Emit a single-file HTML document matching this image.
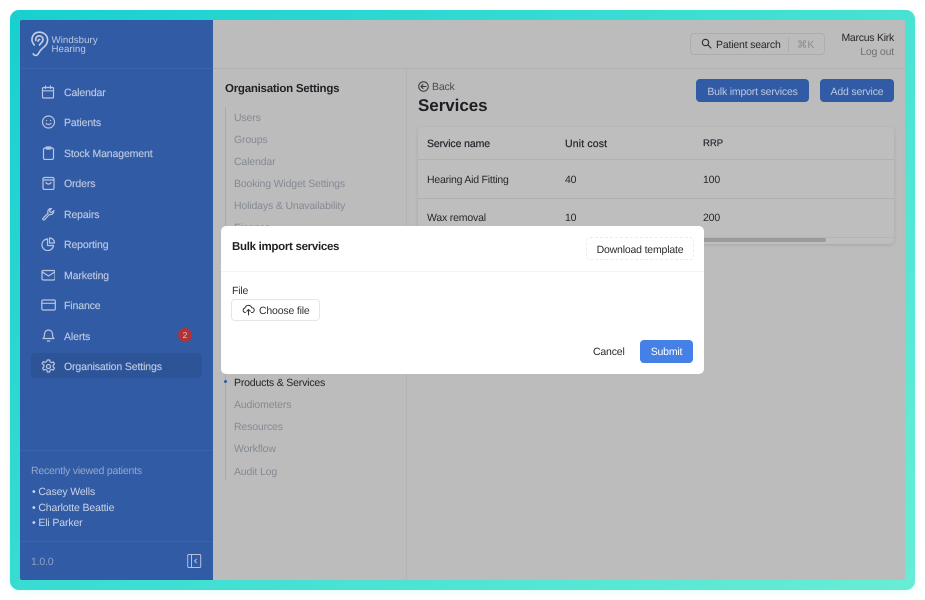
<!DOCTYPE html>
<html><head><meta charset="utf-8">
<style>
*{box-sizing:border-box;margin:0;padding:0}
html,body{width:925px;height:600px;overflow:hidden;background:#fff;font-family:"Liberation Sans",sans-serif;text-rendering:geometricPrecision}
#w{position:absolute;left:0;top:0;width:925px;height:600px;overflow:hidden;filter:blur(.3px)}
.a{position:absolute;white-space:nowrap;line-height:14px;font-size:10.5px;letter-spacing:-.18px;margin-top:1px}
.b{position:absolute}
svg{position:absolute;fill:none;stroke-linecap:round;stroke-linejoin:round}
.nav{color:#bcc8e0;left:64px;letter-spacing:-.12px;-webkit-text-stroke:.15px #bcc8e0}
.ic{stroke:#b9c5de;stroke-width:1.2;margin-left:.5px}
.sub{left:234px;color:#858a93;letter-spacing:-.15px}
.dk{color:#26282c}
.hd{color:#23252b;-webkit-text-stroke:.2px #23252b}
</style></head><body><div id="w">
<div class="b" style="left:10px;top:10px;width:905px;height:580px;border-radius:9px;background:linear-gradient(135deg,#18d0d0,#68edd5);box-shadow:0 3px 8px rgba(100,235,215,.12)"></div>
<div class="b" style="left:20px;top:20px;width:885px;height:560px;background:#bcbcbc;overflow:hidden;border-radius:2px"></div>
<div class="b" style="left:20px;top:20px;width:193px;height:560px;background:#315ca5;border-radius:2px 0 0 2px"></div>
<div class="b" style="left:20px;top:68px;width:193px;height:1px;background:#3a63a9"></div>
<div class="b" style="left:20px;top:450px;width:193px;height:1px;background:#3a63a9"></div>
<div class="b" style="left:20px;top:541px;width:193px;height:1px;background:#3a63a9"></div>
<div class="b" style="left:213px;top:68px;width:692px;height:1px;background:#b0b0b0"></div>
<div class="b" style="left:406px;top:69px;width:1px;height:511px;background:#b3b3b3"></div>

<!-- logo -->
<svg style="left:30px;top:30px" width="20" height="28" viewBox="0 0 20 28" stroke="#c6d0e4" stroke-width="1.6"><path d="M3.200 23.800c.8 1.500 2.300 2 3.600 1.400 2-1 2.300-3.400 4-5.200 2.800-3 6.800-4.800 6.800-10 0-4.700-3.800-7.800-8.300-7.800S1.700 5.300 2 10.500c.1 1.700 1 2.800 2.300 4.500"/><path d="M5.700 10.500C5.500 7.500 7.200 5.800 9.300 5.800s4 1.800 3.700 4.200c-.3 2.200-2.500 3.200-3.500 5"/><path d="M8 11.200c.1-1 .8-1.700 1.700-1.700"/></svg>
<div class="a" style="left:51.500px;top:35px;color:#bcc8e0;font-size:9.700px;line-height:9px;letter-spacing:.05px;white-space:normal;width:60px">Windsbury<br>Hearing</div>

<!-- nav icons -->
<svg class="ic" style="left:40px;top:85px" width="14" height="14" viewBox="0 0 14 14"><rect x="1.500" y="2.500" width="11" height="10.500" rx="1"/><path d="M1.500 5.800h11M4.500 1v2.500M9.500 1v2.500"/></svg>
<svg class="ic" style="left:40px;top:115px" width="14" height="14" viewBox="0 0 14 14"><circle cx="7.500" cy="7" r="6"/><path d="M5 8.500c1.300 1.300 3.700 1.300 5 0M5.500 5.500h.1M9.500 5.500h.1"/></svg>
<svg class="ic" style="left:40px;top:146px" width="14" height="14" viewBox="0 0 14 14"><rect x="2.500" y="2" width="10" height="11.500" rx="1.500"/><rect x="5" y="1" width="5" height="2" rx=".6"/></svg>
<svg class="ic" style="left:40px;top:176px" width="14" height="14" viewBox="0 0 14 14"><rect x="2" y="1.500" width="11" height="12" rx="1.500"/><path d="M2 4h11M5 6.500c.8 2 4.200 2 5 0"/></svg>
<svg class="ic" style="left:40px;top:207px" width="14" height="14" viewBox="0 0 14 14"><path d="M2 11.200 7 6.200C6.300 4 7.300 1.500 10.500 1.500L8.700 3.500 9 5.200 10.700 5.500 12.800 3.500C13 7 10.500 8 8.300 7.500L3.500 12.700C2.500 13.500 1.200 12.200 2 11.200Z"/></svg>
<svg class="ic" style="left:40px;top:237px" width="14" height="14" viewBox="0 0 14 14"><path d="M6.500 2a5.800 5.800 0 1 0 6 6.500H6.500Z"/><path d="M8.500 1a5 5 0 0 1 5 5h-5Z"/></svg>
<svg class="ic" style="left:40px;top:268px" width="14" height="14" viewBox="0 0 14 14"><rect x="1" y="2.500" width="13" height="9.500" rx="1.300"/><path d="M1.300 4 7.500 8 13.700 4"/></svg>
<svg class="ic" style="left:40px;top:298px" width="15" height="14" viewBox="0 0 15 14"><rect x=".8" y="2" width="13.500" height="10" rx="1.300"/><path d="M.8 5.300h13.500"/></svg>
<svg class="ic" style="left:40px;top:328px" width="14" height="15" viewBox="0 0 14 15"><path d="M2 10.500c1.300-1 1.500-2 1.500-4.500a4 4 0 0 1 8 0c0 2.500.2 3.500 1.500 4.500ZM6.300 13h2.400"/></svg>

<div class="b" style="left:31px;top:353px;width:171px;height:25px;background:#2d5497;border-radius:4px"></div>
<svg class="ic" style="left:40px;top:359px" width="15" height="15" viewBox="0 0 15 15"><circle cx="7.500" cy="7.500" r="2"/><path d="M6.300 1h2.400l.4 1.900 1.400.7 1.800-.7 1.200 2-1.400 1.300v1.600l1.400 1.300-1.200 2-1.800-.7-1.400.7-.4 1.900H6.300l-.4-1.900-1.400-.7-1.800.7-1.200-2 1.400-1.300V5.900L1.100 4.600l1.200-2 1.800.7 1.400-.7Z"/></svg>

<div class="a nav" style="top:85px">Calendar</div>
<div class="a nav" style="top:115px">Patients</div>
<div class="a nav" style="top:146px">Stock Management</div>
<div class="a nav" style="top:176px">Orders</div>
<div class="a nav" style="top:206.500px">Repairs</div>
<div class="a nav" style="top:237px">Reporting</div>
<div class="a nav" style="top:267.500px">Marketing</div>
<div class="a nav" style="top:298px">Finance</div>
<div class="a nav" style="top:328.500px">Alerts</div>
<div class="a nav" style="top:358.500px">Organisation Settings</div>
<div class="b" style="left:178px;top:328px;width:14px;height:14px;border-radius:50%;background:#b03338;color:#e3c9cb;font-size:8.500px;line-height:14px;text-align:center">2</div>

<div class="a" style="left:31px;top:462.500px;color:#95a8cb;letter-spacing:-.22px">Recently viewed patients</div>
<div class="a" style="left:32px;top:483.500px;color:#c9d3e6;letter-spacing:-.13px">• Casey Wells</div>
<div class="a" style="left:32px;top:499.500px;color:#c9d3e6;letter-spacing:-.13px">• Charlotte Beattie</div>
<div class="a" style="left:32px;top:515px;color:#c9d3e6;letter-spacing:-.13px">• Eli Parker</div>
<div class="a" style="left:31px;top:553.500px;color:#8ba0c6">1.0.0</div>
<svg style="left:187px;top:554px" width="15" height="14" viewBox="0 0 15 14" stroke="#b4c1db" stroke-width="1"><rect x=".7" y=".5" width="13" height="13" rx="1"/><path d="M4.500.5v13M9.500 5.200 7.500 7l2 1.800"/></svg>

<!-- header -->
<div class="b" style="left:690px;top:33px;width:135px;height:22px;border:1px solid #adadad;border-radius:4px"></div>
<svg style="left:701px;top:38px" width="11" height="11" viewBox="0 0 11 11" stroke="#2c2e32" stroke-width="1.100"><circle cx="4.500" cy="4.500" r="3.200"/><path d="m7 7 3 3"/></svg>
<div class="a dk" style="left:716px;top:37px">Patient search</div>
<div class="b" style="left:788px;top:37px;width:1px;height:15px;background:#adadad"></div>
<div class="a" style="left:797px;top:37px;color:#8d8d8d">⌘K</div>
<div class="a dk" style="right:31px;top:30px;letter-spacing:-.26px">Marcus Kirk</div>
<div class="a" style="right:31px;top:44px;color:#6f7175">Log out</div>

<div class="b" style="left:696px;top:79px;width:113px;height:23px;background:#315ca5;border-radius:4px"></div>
<div class="a" style="left:696px;width:113px;top:84px;text-align:center;color:#bcc8e0">Bulk import services</div>
<div class="b" style="left:820px;top:79px;width:74px;height:23px;background:#315ca5;border-radius:4px"></div>
<div class="a" style="left:820px;width:74px;top:84px;text-align:center;color:#bcc8e0">Add service</div>

<!-- settings list -->
<div class="a" style="left:225px;top:81px;color:#1f2125;font-size:11.500px;font-weight:700;letter-spacing:-.25px">Organisation Settings</div>
<div class="b" style="left:225px;top:107px;width:1px;height:373px;background:#a9a9a9"></div>
<div class="a sub" style="top:110px">Users</div>
<div class="a sub" style="top:132px">Groups</div>
<div class="a sub" style="top:154px">Calendar</div>
<div class="a sub" style="top:176px">Booking Widget Settings</div>
<div class="a sub" style="top:198px">Holidays &amp; Unavailability</div>
<div class="a sub" style="top:220px">Finance</div>
<div class="a" style="left:234px;top:375px;color:#1f2125">Products &amp; Services</div>
<div class="b" style="left:224px;top:380px;width:3px;height:3px;border-radius:50%;background:#315ca5"></div>
<div class="a sub" style="top:397px">Audiometers</div>
<div class="a sub" style="top:419px">Resources</div>
<div class="a sub" style="top:441px">Workflow</div>
<div class="a sub" style="top:463.500px">Audit Log</div>

<!-- content -->
<svg style="left:418px;top:81px" width="11" height="11" viewBox="0 0 11 11" stroke="#33353a" stroke-width="1"><circle cx="5.500" cy="5.500" r="4.800"/><path d="M8 5.500H3M5 3.500l-2 2 2 2"/></svg>
<div class="a" style="left:432px;top:79px;color:#4b4d52">Back</div>
<div class="a" style="left:418px;top:94px;color:#1c1e22;font-size:17px;line-height:22px;font-weight:700;letter-spacing:-.05px">Services</div>

<div class="b" style="left:418px;top:127px;width:476px;height:117px;background:#bebebe;border-radius:4px;box-shadow:0 1px 3px rgba(0,0,0,.12)"></div>
<div class="b" style="left:418px;top:159px;width:476px;height:1px;background:#b1b1b1"></div>
<div class="b" style="left:418px;top:198px;width:476px;height:1px;background:#b1b1b1"></div>
<div class="b" style="left:418px;top:237px;width:476px;height:1px;background:#b4b4b4"></div>
<div class="b" style="left:600px;top:238px;width:226px;height:4px;background:#9b9b9b;border-radius:2px"></div>
<div class="a hd" style="left:427px;top:136px;letter-spacing:-.1px">Service name</div>
<div class="a hd" style="left:565px;top:136px;letter-spacing:.15px">Unit cost</div>
<div class="a hd" style="left:703px;top:136px;font-size:9.500px;letter-spacing:0">RRP</div>
<div class="a dk" style="left:427px;top:171.500px;letter-spacing:-.22px">Hearing Aid Fitting</div>
<div class="a dk" style="left:565px;top:171.500px">40</div>
<div class="a dk" style="left:703px;top:171.500px">100</div>
<div class="a dk" style="left:427px;top:210px">Wax removal</div>
<div class="a dk" style="left:565px;top:210px">10</div>
<div class="a dk" style="left:703px;top:210px">200</div>

<!-- modal -->
<div class="b" style="left:221px;top:226px;width:483px;height:148px;background:#fff;border-radius:5px"></div>
<div class="b" style="left:221px;top:271px;width:483px;height:1px;background:#f3f3f3"></div>
<div class="a" style="left:232px;top:239px;color:#222;font-size:11.500px;font-weight:700;letter-spacing:-.3px">Bulk import services</div>
<div class="b" style="left:586px;top:237px;width:108px;height:23px;border:1px dashed #ececec;border-radius:4px"></div>
<div class="a" style="left:586px;width:108px;top:241.500px;text-align:center;color:#2b2b2b">Download template</div>
<div class="a" style="left:232px;top:282.500px;color:#333">File</div>
<div class="b" style="left:231px;top:299px;width:89px;height:22px;border:1px solid #e6e6e6;border-radius:4px"></div>
<svg style="left:242px;top:304px" width="13" height="12" viewBox="0 0 13 12" stroke="#333" stroke-width="1"><path d="M3.500 8.500H3A2.300 2.300 0 0 1 3 4a3.500 3.500 0 0 1 6.700-.3A2.400 2.400 0 0 1 10 8.500h-.5M6.500 11V5.500M4.700 7.200l1.800-1.700 1.800 1.700"/></svg>
<div class="a" style="left:259px;top:302.500px;color:#333">Choose file</div>
<div class="a" style="left:593px;top:344px;color:#2b2b2b">Cancel</div>
<div class="b" style="left:640px;top:340px;width:53px;height:23px;background:#4480e6;border-radius:4px"></div>
<div class="a" style="left:640px;width:53px;top:344px;text-align:center;color:#fff">Submit</div>
</div></body></html>
